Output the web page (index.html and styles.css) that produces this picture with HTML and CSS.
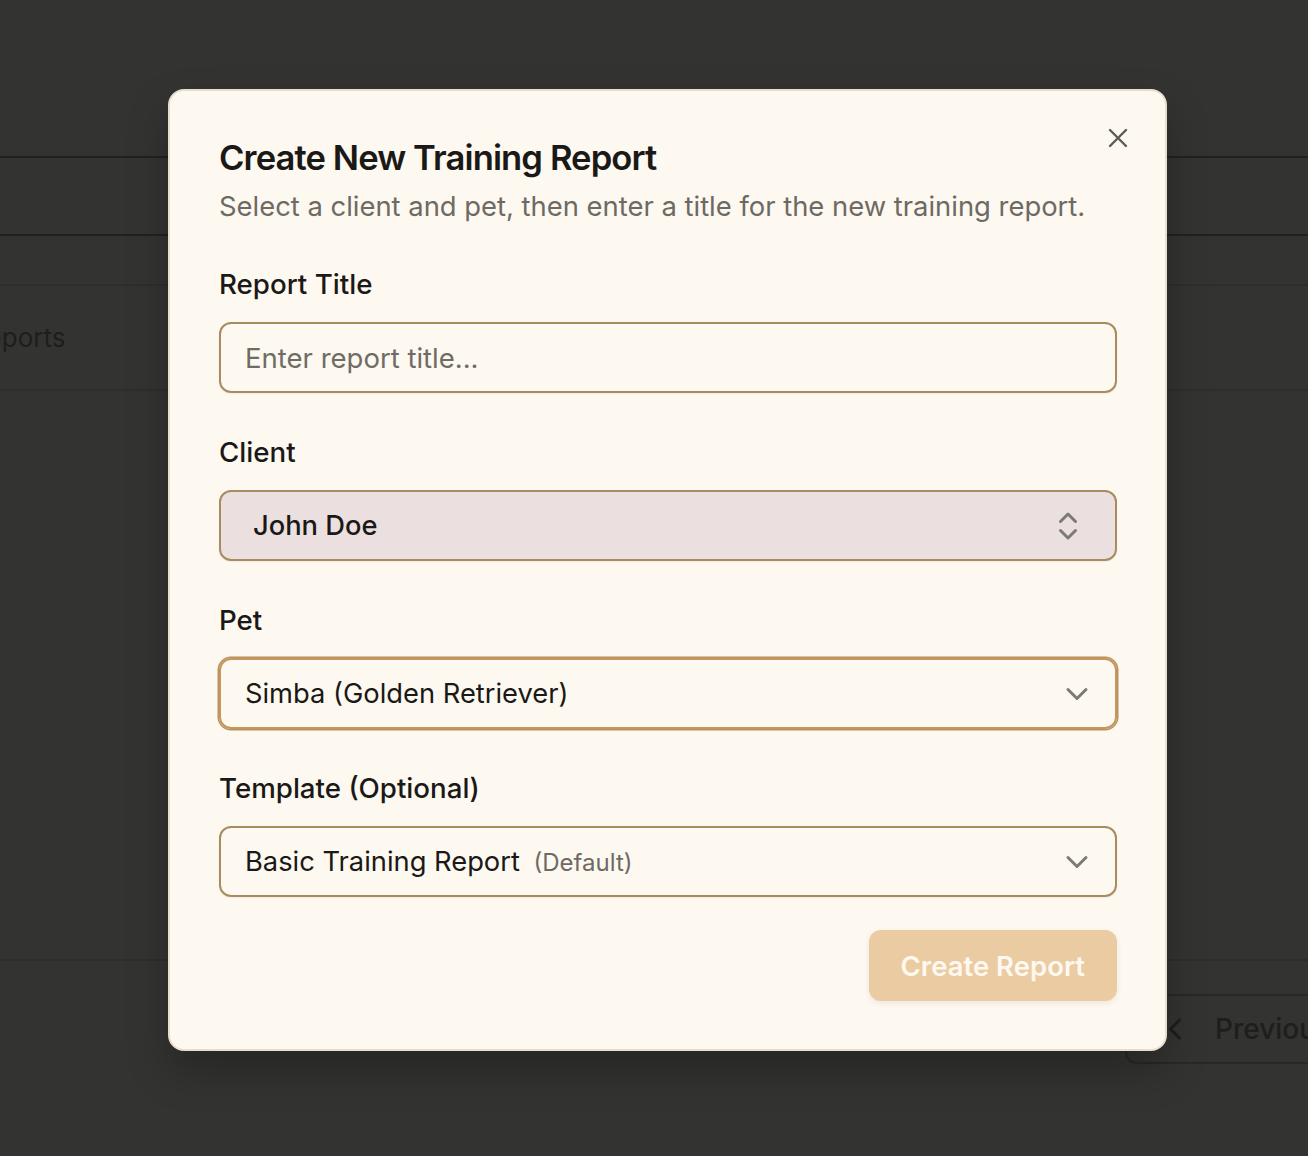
FILE: index.html
```html
<!DOCTYPE html>
<html lang="en">
<head>
    <meta charset="UTF-8">
    <meta name="viewport" content="width=device-width, initial-scale=1.0">
    <title>Training Reports</title>
    <link rel="stylesheet" href="styles.css">
</head>
<body>

<div class="page">
    <div class="page-header"></div>
    <div class="page-row"></div>
    <div class="page-tabs"></div>
    <div class="page-title">Training Reports</div>
    <div class="page-content"></div>
    <div class="page-footer">
        <div class="pager-button">
            <svg width="36" height="36" viewBox="0 0 24 24" fill="none" stroke="currentColor" stroke-width="2" stroke-linecap="round" stroke-linejoin="round"><path d="M15 6l-6 6 6 6"/></svg>
            <span>Previous</span>
        </div>
    </div>
</div>

<div class="modal">
    <button class="close-button" aria-label="Close">
        <svg width="32" height="32" viewBox="0 0 24 24" fill="none" stroke="currentColor" stroke-width="1.8" stroke-linecap="round"><path d="M18 6L6 18M6 6l12 12"/></svg>
    </button>

    <h2 class="modal-title">Create New Training Report</h2>
    <p class="modal-desc">Select a client and pet, then enter a title for the new training report.</p>

    <div class="field">
        <label class="field-label">Report Title</label>
        <div class="input placeholder">Enter report title...</div>
    </div>

    <div class="field">
        <label class="field-label">Client</label>
        <div class="input select-client">
            <span>John Doe</span>
            <svg width="36" height="36" viewBox="0 0 24 24" fill="none" stroke="currentColor" stroke-width="2" stroke-linecap="round" stroke-linejoin="round"><path d="M7 9l5-5 5 5M7 15l5 5 5-5"/></svg>
        </div>
    </div>

    <div class="field">
        <label class="field-label">Pet</label>
        <div class="input focused">
            <span>Simba (Golden Retriever)</span>
            <svg width="36" height="36" viewBox="0 0 24 24" fill="none" stroke="currentColor" stroke-width="2" stroke-linecap="round" stroke-linejoin="round"><path d="M6 9l6 6 6-6"/></svg>
        </div>
    </div>

    <div class="field">
        <label class="field-label">Template (Optional)</label>
        <div class="input">
            <span>Basic Training Report <span class="muted">(Default)</span></span>
            <svg width="36" height="36" viewBox="0 0 24 24" fill="none" stroke="currentColor" stroke-width="2" stroke-linecap="round" stroke-linejoin="round"><path d="M6 9l6 6 6-6"/></svg>
        </div>
    </div>

    <div class="actions">
        <button class="create-button">Create Report</button>
    </div>
</div>

</body>
</html>
```

FILE: styles.css
```css
body {
    margin: 0;
    font-family: Inter, "Noto Sans", sans-serif;
    background-color: #333331;
    height: 1156px;
    overflow: hidden;
}
.page {
    display: flex;
    flex-direction: column;
    height: 100%;
}
.page-header {
    height: 156px;
    border-bottom: 2px solid #24211c;
}
.page-row {
    height: 76px;
    border-bottom: 2px solid #24211c;
}
.page-tabs {
    height: 48px;
    border-bottom: 2px solid #2e2e2c;
}
.page-title {
    height: 103px;
    border-bottom: 2px solid #2e2e2c;
    display: flex;
    align-items: center;
    margin-left: -136px;
    font-size: 26px;
    color: #1e1e1c;
}
.page-content {
    height: 568px;
    border-bottom: 2px solid #2d2d2b;
}
.page-footer {
    flex: 1;
    position: relative;
}
.pager-button {
    position: absolute;
    left: 1125px;
    top: 33px;
    width: 260px;
    height: 66px;
    border: 2px solid #282826;
    border-radius: 12px;
    display: flex;
    align-items: center;
    gap: 22px;
    padding-left: 30px;
    color: #1e1e1c;
    font-size: 28px;
    font-weight: 500;
}

.modal {
    position: absolute;
    left: 168px;
    top: 89px;
    box-sizing: border-box;
    width: 999px;
    padding: 46px 48px 48px 49px;
    background: #fdf8f0;
    border: 2px solid #e7dece;
    border-radius: 16px;
    box-shadow: 0 20px 40px rgba(0, 0, 0, 0.25);
    color: #1a1917;
}
.close-button {
    position: absolute;
    top: 31px;
    right: 31px;
    background: none;
    border: none;
    padding: 0;
    color: #5c5b58;
    cursor: pointer;
}
.modal-title {
    margin: 0;
    font-size: 34.6px;
    font-weight: 600;
    letter-spacing: -0.9px;
    line-height: 40px;
}
.modal-desc {
    margin: 11px 0 0 0;
    font-size: 27.4px;
    line-height: 36px;
    color: #6d6a64;
}
.field {
    margin-top: 41px;
    display: flex;
    flex-direction: column;
    gap: 20px;
}
.modal-desc + .field {
    margin-top: 42px;
}
.field-label {
    font-size: 27.7px;
    font-weight: 500;
    line-height: 36px;
}
.input {
    box-sizing: border-box;
    height: 71px;
    border: 2px solid #a88b5f;
    border-radius: 12px;
    padding: 0 20px 0 24px;
    display: flex;
    align-items: center;
    justify-content: space-between;
    font-size: 27.3px;
    box-shadow: 0 1px 2px rgba(0, 0, 0, 0.05);
}
.input svg {
    color: #7c7a76;
    flex-shrink: 0;
}
.placeholder {
    color: #6f6c66;
    font-size: 27.5px;
}
.select-client {
    background: #ebe0df;
    padding-left: 32px;
    padding-right: 29px;
    font-weight: 500;
}
.focused {
    border-color: #c6965b;
    box-shadow: 0 0 0 1.5px #b99160;
}
.muted {
    margin-left: 6px;
    font-size: 24px;
    color: #6d6a64;
}
.actions {
    margin-top: 33px;
    display: flex;
    justify-content: flex-end;
}
.create-button {
    background-color: #ebcba1;
    color: #fdf8f0;
    border: none;
    border-radius: 12px;
    height: 71px;
    padding: 0 32px;
    font-family: inherit;
    font-size: 27.5px;
    font-weight: 600;
    box-shadow: 0 2px 6px rgba(0, 0, 0, 0.08);
}
```
